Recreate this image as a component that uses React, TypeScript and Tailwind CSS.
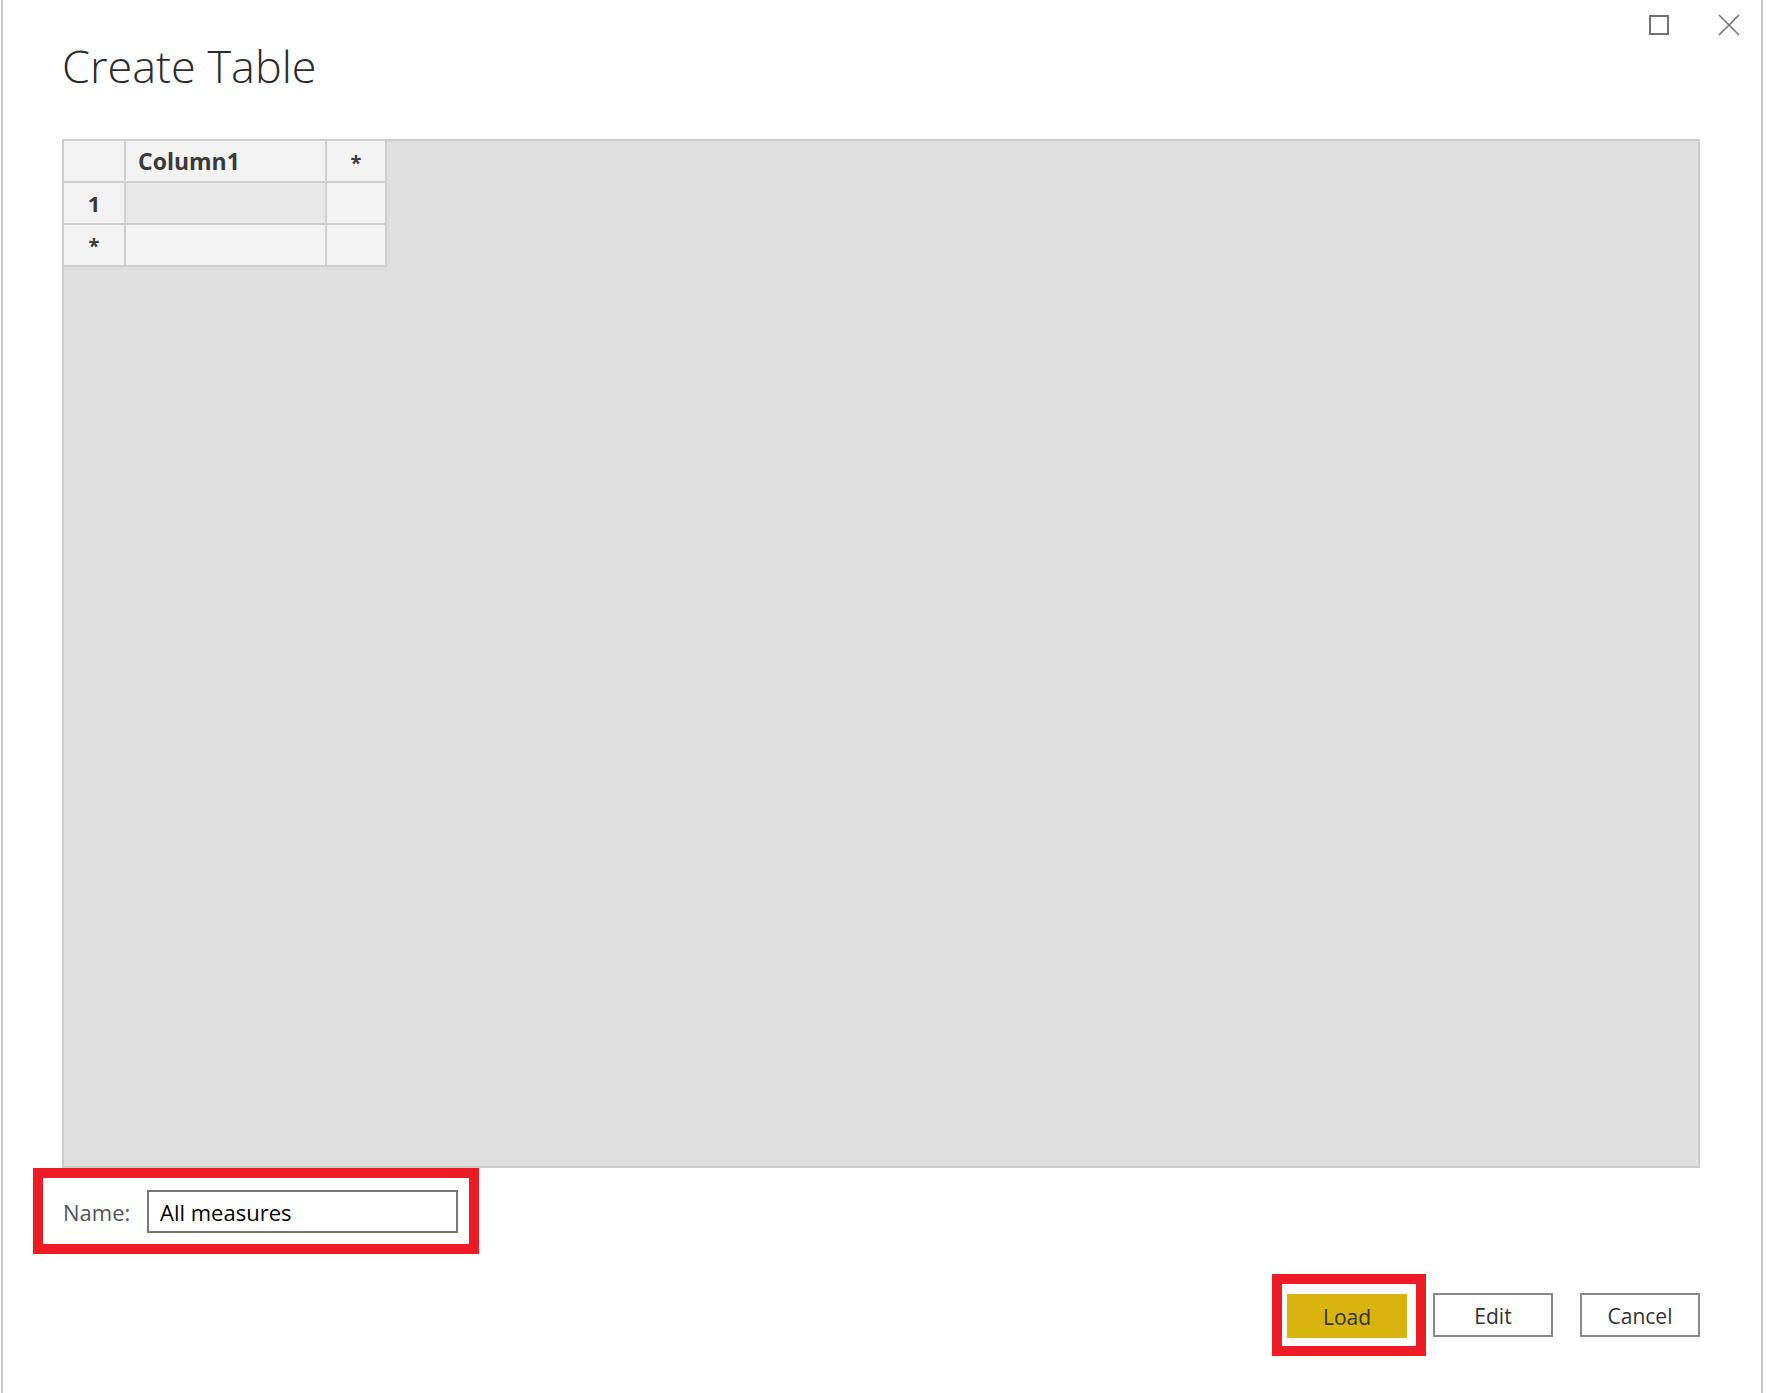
import React from 'react';

const font = { fontFamily: '"Open Sans", "Noto Sans", "Liberation Sans", sans-serif' };

function WindowControls() {
    return (
        <div className="h-[40px] flex justify-end items-start pt-[14px] pr-[21px] gap-[49px]">
            <svg width="20" height="20" viewBox="0 0 20 20" className="mt-[1px]">
                <rect x="1" y="1" width="18" height="18" fill="none" stroke="#717171" strokeWidth="2" />
            </svg>
            <svg width="22" height="22" viewBox="0 0 22 22">
                <path d="M1 1 L21 21 M21 1 L1 21" stroke="#737373" strokeWidth="1.6" fill="none" />
            </svg>
        </div>
    );
}

function DataGrid() {
    return (
        <div className="w-[1638px] h-[1029px] border-2 border-[#cdcdcd] bg-[#e0e0e0]">
            <div className="inline-grid grid-cols-[60px_199px_58px] grid-rows-[40px_40px_40px] gap-[2px] bg-[#cfcfcf] pr-[2px] pb-[2px] text-[#3a3a3a] font-bold">
                <div className="bg-[#f3f3f3]" />
                <div className="bg-[#f3f3f3] flex items-center pl-[12px] text-[23px]">Column1</div>
                <div className="bg-[#f3f3f3] flex justify-center pt-[12px] text-[20px] leading-none">*</div>
                <div className="bg-[#f3f3f3] flex items-center justify-center text-[22px]">1</div>
                <div className="bg-[#e8e8e8]" />
                <div className="bg-[#f4f4f4]" />
                <div className="bg-[#f3f3f3] flex justify-center pt-[11px] text-[20px] leading-none">*</div>
                <div className="bg-[#f4f4f4]" />
                <div className="bg-[#f4f4f4]" />
            </div>
        </div>
    );
}

function ActionButton({ label, primary }: { label: string; primary?: boolean }) {
    return (
        <button
            className={
                primary
                    ? 'w-[120px] h-[44px] pt-[3px] bg-[#d9b40e] text-[#333333] text-[21px]'
                    : 'w-[120px] h-[44px] pt-[3px] bg-white border-2 border-[#888888] text-[#333333] text-[21px]'
            }
        >
            {label}
        </button>
    );
}

export default function App() {
    return (
        <div className="w-[1766px] h-[1393px] bg-white" style={font}>
            <div className="ml-[1px] w-[1762px] h-[1393px] border-x-2 border-[#cccccc]">
                <WindowControls />

                <div className="pl-[59px]">
                    <h1 className="h-[48px] mt-[3px] leading-none text-[45px] font-light text-[#2b2b2b]">Create Table</h1>

                    <div className="mt-[48px]">
                        <DataGrid />
                    </div>

                    <div className="-ml-[29px] w-[446px] h-[86px] border-[10px] border-[#ed1c24] flex items-center pl-[20px] pr-[11px]">
                        <span className="text-[22px] text-[#555555] w-[84px] pt-[2px]">Name:</span>
                        <div className="w-[311px] h-[43px] border-2 border-[#767676] flex items-center pl-[11px] pt-[3px] text-[22px] text-black">
                            All measures
                        </div>
                    </div>

                    <div className="w-[1638px] mt-[20px] flex items-center justify-end">
                        <div className="h-[82px] border-[10px] border-[#ed1c24] pl-[5px] pr-[9px] pt-[10px] pb-[8px]">
                            <ActionButton label="Load" primary />
                        </div>
                        <div className="ml-[7px]">
                            <ActionButton label="Edit" />
                        </div>
                        <div className="ml-[27px]">
                            <ActionButton label="Cancel" />
                        </div>
                    </div>
                </div>
            </div>
        </div>
    );
}
